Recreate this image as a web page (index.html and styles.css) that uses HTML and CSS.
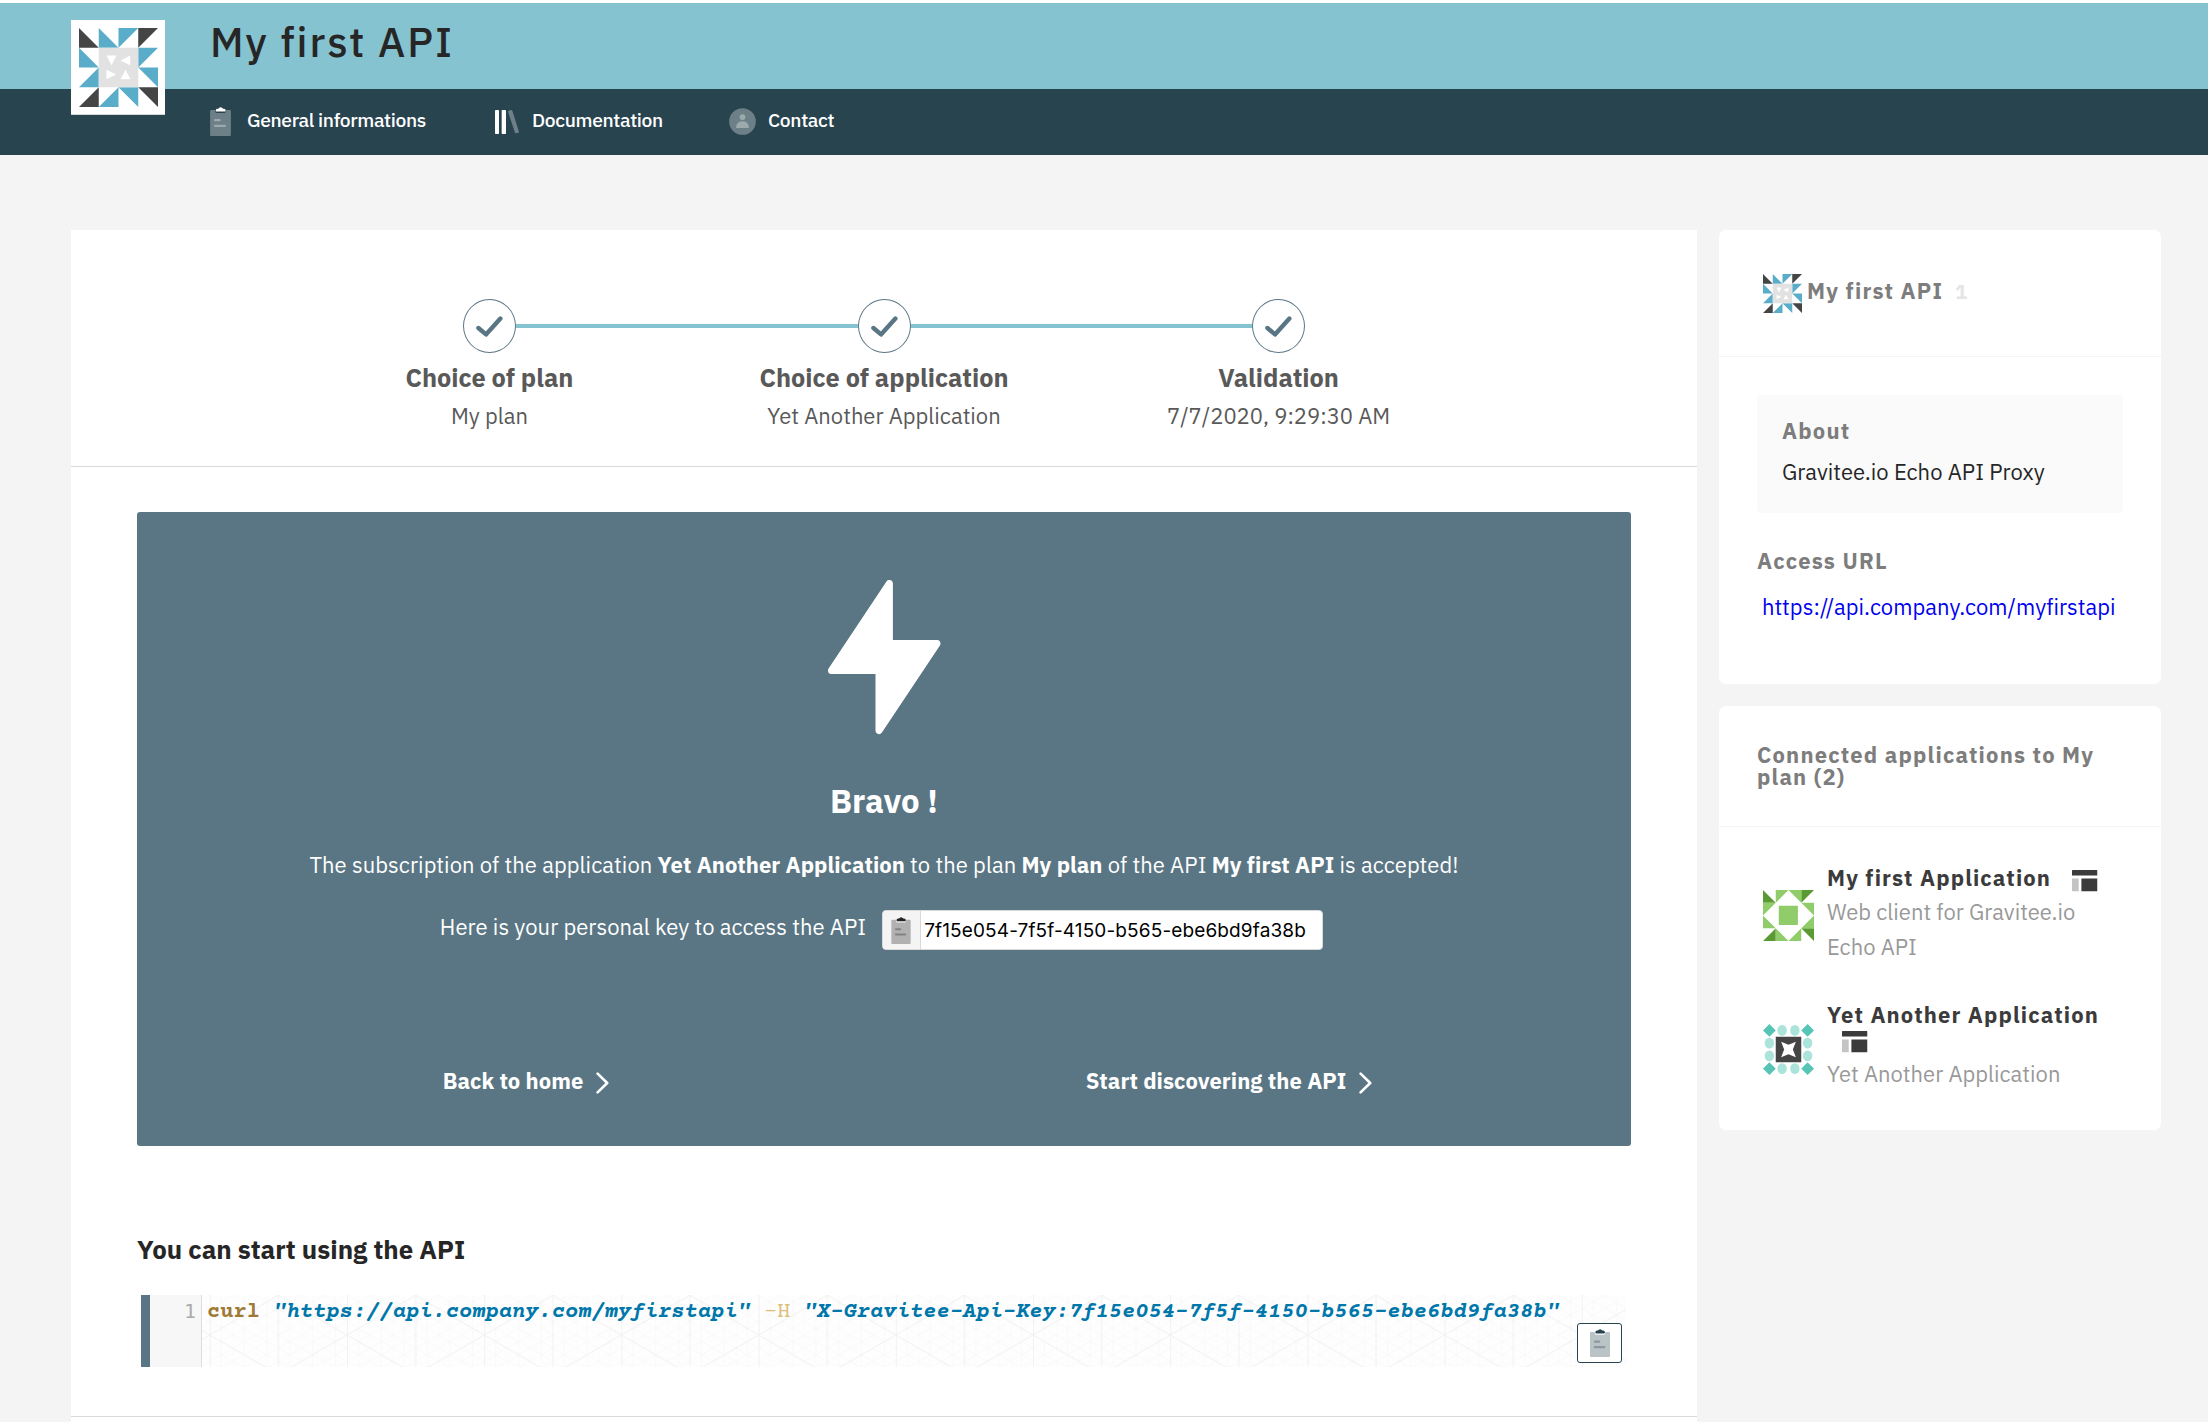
FILE: index.html
```
<!DOCTYPE html>
<html lang="en">
<head>
<meta charset="utf-8">
<title>My first API</title>
<link rel="stylesheet" href="styles.css">
</head>
<body>
<svg class="defs" aria-hidden="true">
  <symbol id="api-logo" viewBox="0 0 236 236">
    <path fill="#454545" d="M0 0 59 59H0zM177 0h59L177 59zM59 177v59H0zM177 177h59v59z"/>
    <path fill="#5aadc9" d="M59 0 118 59H59zM118 0h59L118 59zM0 59 59 118H0zM177 59h59L177 118zM59 118v59H0zM177 118h59v59zM118 177v59H59zM118 177h59v59z"/>
    <path fill="#e2e2e2" d="M59 59h118v118H59z"/>
    <path fill="#fff" d="M82 82h30L97 111zM124 97l29-15v29zM82 125l29 14-29 14zM139 125l15 28h-30z"/>
  </symbol>
  <symbol id="clipboard" viewBox="0 0 63 88">
    <path fill="currentColor" opacity=".32" d="M3 9h12v4q0 5 5 5h23q5 0 5-5V9h12q3 0 3 3v73q0 3-3 3H3q-3 0-3-3V12q0-3 3-3z"/>
    <path fill="currentColor" d="M27 3q5-5 10 0l2 2h3q5 0 5 5v1q0 3-3 3H20q-3 0-3-3v-1q0-5 5-5h3z"/>
    <path stroke="currentColor" stroke-width="7" stroke-linecap="round" opacity=".32" d="M15 40h14M15 57h30"/>
  </symbol>
  <symbol id="layout" viewBox="0 0 76 64">
    <path fill="#3b3b3b" d="M2 0h72q2 0 2 2v14H0V2q0-2 2-2zM28 25h48v37q0 2-2 2H28z"/>
    <path fill="#c4c4c4" d="M0 25h20v39H2q-2 0-2-2z"/>
  </symbol>
  <symbol id="check" viewBox="0 0 27 21">
    <path fill="none" stroke="#5a7684" stroke-width="4.4" stroke-linecap="round" stroke-linejoin="round" d="M2.4 12 10 18.4 24.4 2.6"/>
  </symbol>
  <symbol id="chevron" viewBox="0 0 13 22">
    <path fill="none" stroke="#fff" stroke-width="2.6" stroke-linecap="round" stroke-linejoin="round" d="M1.6 1.6 11.2 11 1.6 20.4"/>
  </symbol>
</svg>

<header class="header">
  <div class="header-top"><h1>My first API</h1></div>
  <nav class="nav">
    <a><span class="nav-icon"><svg width="21" height="29"><use href="#clipboard"/></svg></span>General informations</a>
    <a><span class="nav-icon nav-icon-books"><svg width="24" height="24" viewBox="0 0 72 72"><rect width="12" height="72" rx="2" fill="#fff"/><rect x="20" width="13" height="72" rx="2" fill="#fff"/><path fill="#fff" opacity=".32" d="M41 2l7-2q3 0 4 2l20 64q0 2-2 2l-7 2q-2 0-3-2L39 5q0-2 2-3z"/></svg></span>Documentation</a>
    <a><span class="nav-icon nav-icon-contact"><svg width="27" height="27" viewBox="0 0 80 80"><circle cx="40" cy="40" r="39.5" fill="#fff" opacity=".32"/><g fill="#fff" opacity=".32"><circle cx="40" cy="27" r="8.5"/><path d="M21 59q0-20 19-20t19 20z"/></g></svg></span>Contact</a>
  </nav>
  <div class="header-logo"><svg width="79" height="79"><use href="#api-logo"/></svg></div>
</header>

<div class="layout">
  <main class="main">
    <ol class="steps">
      <li><div class="track"><i></i><b class="dot"><svg width="27" height="21"><use href="#check"/></svg></b><i class="on"></i></div><h2>Choice of plan</h2><p>My plan</p></li>
      <li><div class="track"><i class="on"></i><b class="dot"><svg width="27" height="21"><use href="#check"/></svg></b><i class="on"></i></div><h2>Choice of application</h2><p>Yet Another Application</p></li>
      <li><div class="track"><i class="on"></i><b class="dot"><svg width="27" height="21"><use href="#check"/></svg></b><i></i></div><h2>Validation</h2><p>7/7/2020, 9:29:30 AM</p></li>
    </ol>
    <section class="content">
      <div class="panel">
        <svg class="bolt" width="113" height="155" viewBox="0 0 113 155"><path fill="#fff" stroke="#fff" stroke-width="7" stroke-linejoin="round" d="M61.4 3.5V63.5H109L51 150.5V90.500H3.500z"/></svg>
        <h2>Bravo !</h2>
        <p class="message">The subscription of the application <strong>Yet Another Application</strong> to the plan <strong>My plan</strong> of the API <strong>My first API</strong> is accepted!</p>
        <div class="key-row">
          <span class="key-label">Here is your personal key to access the API</span>
          <div class="key"><span class="key-copy"><svg width="20" height="27"><use href="#clipboard"/></svg></span><span class="key-value">7f15e054-7f5f-4150-b565-ebe6bd9fa38b</span></div>
        </div>
        <div class="links">
          <a>Back to home<svg width="13" height="22"><use href="#chevron"/></svg></a>
          <a>Start discovering the API<svg width="13" height="22"><use href="#chevron"/></svg></a>
        </div>
      </div>
      <h3>You can start using the API</h3>
      <div class="code">
        <div class="gutter">1</div>
        <div class="source">
          <svg class="grid" width="100%" height="100%">
            <pattern id="minor" width="22.87" height="13.2" patternUnits="userSpaceOnUse" patternTransform="translate(145 40)"><path fill="none" stroke="#f9f9f9" d="M0 0 22.87 13.2M0 13.2 22.87 0M0 0V13.2M11.43 0V13.2"/></pattern>
            <pattern id="major" width="137.2" height="79.2" patternUnits="userSpaceOnUse" patternTransform="translate(145 40)"><path fill="none" stroke="#f2f2f2" d="M0 0 137.2 79.2M0 79.2 137.2 0M.5 0V79.2M68.6 0V79.2"/></pattern>
            <rect width="100%" height="100%" fill="url(#minor)"/><rect width="100%" height="100%" fill="url(#major)"/>
          </svg>
          <code><b>curl</b> <em>"https://api.company.com/myfirstapi"</em> <span>-H</span> <em>"X-Gravitee-Api-Key:7f15e054-7f5f-4150-b565-ebe6bd9fa38b"</em></code>
          <button class="copy"><svg width="20" height="28"><use href="#clipboard"/></svg></button>
        </div>
      </div>
    </section>
  </main>

  <aside class="side">
    <section class="card about-card">
      <div class="card-head"><svg width="39" height="39"><use href="#api-logo"/></svg><h4>My first API</h4><span class="version">1</span></div>
      <div class="card-body">
        <div class="about"><h4>About</h4><p>Gravitee.io Echo API Proxy</p></div>
        <h4 class="access">Access URL</h4>
        <a class="url">https://api.company.com/myfirstapi</a>
      </div>
    </section>
    <section class="card apps-card">
      <div class="card-head"><h4>Connected applications to My plan (2)</h4></div>
      <div class="app">
        <svg width="51" height="51" viewBox="0 0 152 152"><path fill="#5b9a33" d="M0 0 38 38H0zM114 0h38L114 38zM38 114v38H0zM114 114h38v38z"/><path fill="#90cd6a" d="M38 0h38L38 38zM76 0h38v38zM0 38h38L0 76zM114 38h38v38zM0 76l38 38H0zM152 76v38h-38zM38 114l38 38H38zM114 114v38H76zM47 47h57v57H47z"/></svg>
        <div><h5>My first Application <svg width="25.500" height="21.500"><use href="#layout"/></svg></h5><p>Web client for Gravitee.io Echo API</p></div>
      </div>
      <div class="app app-second">
        <svg width="51" height="51" viewBox="0 0 152 152"><path fill="#56c5b6" d="M19 0 38 19 19 38 0 19zM133 0l19 19-19 19-19-19zM19 114l19 19-19 19-19-19zM133 114l19 19-19 19-19-19z"/><g fill="#aae4da"><ellipse cx="57" cy="19" rx="14" ry="16"/><ellipse cx="95" cy="19" rx="14" ry="16"/><ellipse cx="57" cy="133" rx="14" ry="16"/><ellipse cx="95" cy="133" rx="14" ry="16"/><ellipse cx="19" cy="57" rx="14" ry="16"/><ellipse cx="19" cy="95" rx="14" ry="16"/><ellipse cx="133" cy="57" rx="14" ry="16"/><ellipse cx="133" cy="95" rx="14" ry="16"/></g><path fill="#454545" d="M38 38h76v76H38z"/><path fill="#fff" d="M54 53 76 62 98 53 89 76 98 99 76 90 54 99 63 76z"/></svg>
        <div><h5>Yet Another Application <svg width="25.500" height="21.500"><use href="#layout"/></svg></h5><p>Yet Another Application</p></div>
      </div>
    </section>
  </aside>
</div>
</body>
</html>
```
FILE: styles.css
```
* { box-sizing: border-box; margin: 0; padding: 0; }

body {
  height: 1422px;
  overflow: hidden;
  background: #f4f4f4;
  color: #262626;
  font: 22px/30px "IBM Plex Sans", Roboto, "Liberation Sans", sans-serif;
}

svg { display: block; flex: none; }
.defs { position: absolute; width: 0; height: 0; }

/* Header */
.header { position: relative; border-top: 3px solid #fff; }
.header-top { height: 86px; padding-left: 210px; background: #86c3d0; }
.header-top h1 { font-size: 41.25px; line-height: 78px; font-weight: 500; letter-spacing: 1.95px; }
.header-logo {
  position: absolute;
  left: 71px;
  top: 17px;
  width: 94px;
  height: 95px;
  padding: 8px;
  background: #fff;
  border-bottom: 1px solid #d5d5d5;
}
.nav {
  display: grid;
  grid-template-columns: 285px 233.5px auto;
  height: 66px;
  padding-left: 210px;
  background: #28444f;
  color: #fff;
  font-size: 19.25px;
  font-weight: 500;
  line-height: 62px;
  letter-spacing: -.35px;
}
.nav a { display: flex; }
.nav-icon { width: 37px; padding-top: 18px; }
.nav-icon-books { padding-top: 21px; }
.nav-icon-contact { width: 39.5px; padding-top: 19px; }

/* Page columns */
.layout { display: flex; align-items: flex-start; gap: 22px; padding: 75px 47px 0 71px; }
.main { width: 1626px; height: 1250px; background: #fff; }
.side { display: grid; gap: 22px; width: 442px; }

/* Steps */
.steps {
  display: grid;
  grid-template-columns: repeat(3, 394.6px);
  justify-content: center;
  height: 237px;
  padding-top: 69px;
  border-bottom: 1px solid #d9d9d9;
  list-style: none;
  color: #595959;
  text-align: center;
}
.track { display: flex; align-items: center; height: 54px; }
.track i { flex: 1; height: 4px; }
.track .on { background: #86c3d0; }
.dot {
  display: grid;
  place-items: center;
  width: 53px;
  height: 54px;
  border: 1px solid #5a7684;
  border-radius: 50%;
}
.steps h2 { margin-top: 10px; font-size: 25.3px; line-height: 30px; }
.steps p { margin-top: 8px; }

/* Result panel */
.content { height: 950px; padding: 45px 66px 0; border-bottom: 1px solid #d9d9d9; }
.panel {
  display: flex;
  flex-direction: column;
  align-items: center;
  height: 634px;
  padding-top: 68px;
  border-radius: 3px;
  background: #5a7684;
  color: #fff;
}
.panel h2 { margin-top: 46px; font-size: 33px; line-height: 40px; }
.message { margin-top: 29px; letter-spacing: .05px; }
.key-row { display: flex; gap: 16px; margin-top: 30px; padding-right: 5px; }
.key-label { line-height: 34px; letter-spacing: .03px; }
.key {
  display: flex;
  width: 441px;
  height: 40px;
  overflow: hidden;
  border: 1px solid #d9d9d9;
  border-radius: 4px;
  background: #fff;
  color: #000;
}
.key-copy { width: 38px; padding: 6px 0 0 8px; border-right: 1px solid #d9d9d9; background: #f4f4f4; color: #262626; }
.key-value { padding-left: 3px; font: 19px/39px Inter, "Liberation Sans", sans-serif; letter-spacing: .13px; }
.links {
  display: grid;
  grid-template-columns: 703px 703px;
  margin: 116px 13px 0 0;
  font-weight: 700;
  letter-spacing: .06px;
}
.links a { display: flex; justify-content: center; gap: 13px; }
.links svg { margin-top: 6px; }

/* Code sample */
.content h3 { margin-top: 84px; font-size: 25.85px; line-height: 40px; }
.code { display: flex; width: 1485px; height: 72px; margin: 25px 0 0 4px; border-left: 9px solid #5a7684; font: 22px/36px "Courier Prime", "Liberation Mono", monospace; letter-spacing: .07px; }
.gutter { width: 52px; padding: 6px 5px 0 0; border-right: 1px solid #ddd; background: #f7f7f7; color: #aaa; text-align: right; font-size: 20px; line-height: 20px; font-family: "DejaVu Sans Mono", monospace; }
.source { position: relative; flex: 1; background: #fefefe; }
.grid { position: absolute; inset: 0; }
.source code { position: relative; display: block; padding-left: 5px; font: inherit; white-space: pre; }
.source b { color: #9e7a36; }
.source em { color: #0077aa; font-weight: 700; }
.source span { color: #dbbf78; }
.copy {
  position: absolute;
  right: 4px;
  bottom: 4px;
  display: grid;
  place-items: center;
  width: 45px;
  height: 40px;
  border: 1px solid #28444f;
  border-radius: 3px;
  background: #fff;
  color: #28444f;
}

/* Sidebar */
.card { overflow: hidden; border-radius: 7px; background: #fff; }
.card h4 { color: #7d7d7d; font-size: 22px; line-height: 30px; letter-spacing: 1.18px; }
.about-card { height: 454px; }
.about-card .card-head { display: flex; height: 127px; padding: 44px 0 0 44px; border-bottom: 1px solid #f4f4f4; }
.about-card .card-head h4 { margin: 2px 0 0 5px; }
.version { margin: 2px 0 0 12px; color: #e5e5e5; font-size: 20px; font-weight: 700; line-height: 31px; }
.card-body { padding: 38px 38px 0; }
.about { height: 118px; padding: 20.5px 25px 0; border-radius: 4px; background: #fafafa; }
.about p { margin-top: 11px; letter-spacing: .03px; }
.card .access { margin-top: 32.5px; }
.url { display: block; margin-top: 16px; padding-left: 5px; color: #0000ee; letter-spacing: .04px; }

.apps-card { height: 424px; }
.apps-card .card-head { height: 121px; padding: 38px 38px 0; border-bottom: 1px solid #f4f4f4; }
.apps-card .card-head h4 { line-height: 22px; }
.app { display: flex; gap: 13px; padding: 39px 38px 0 44px; }
.app > svg { margin-top: 24px; }
.app h5 { color: #3b3b3b; font-size: 22px; line-height: 24.5px; letter-spacing: 1.12px; }
.app h5 svg { display: inline-block; margin-left: 15px; vertical-align: -5.5px; }
.app p { margin-top: 2px; color: #999; line-height: 35px; }
.app-second { padding-top: 39px; }
.app-second > svg { margin-top: 21px; }
.app-second p { margin-top: 6px; line-height: 30px; }
```
